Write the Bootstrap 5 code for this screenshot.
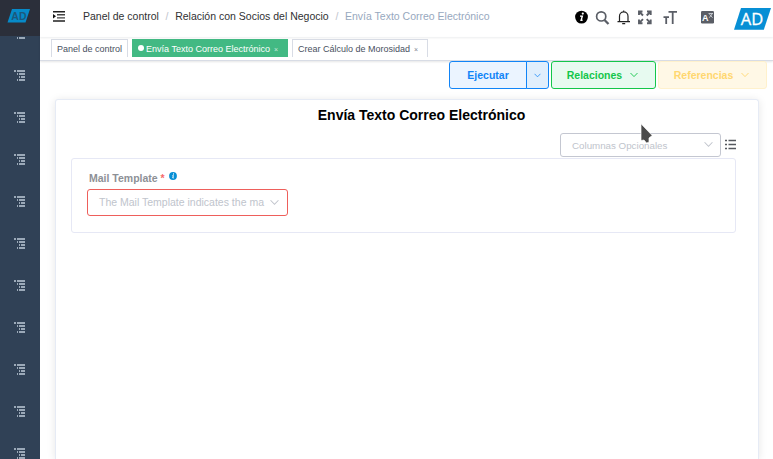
<!DOCTYPE html>
<html lang="es">
<head>
<meta charset="utf-8">
<meta name="viewport" content="width=device-width, initial-scale=1">
<title>Envía Texto Correo Electrónico</title>
<link href="https://cdn.jsdelivr.net/npm/bootstrap@5.3.0/dist/css/bootstrap.min.css" rel="stylesheet">
<style>
body{font-family:"Liberation Sans",Arial,sans-serif;font-size:10.5px;line-height:1.2;color:#303133;background:#fff;height:459px}
svg{display:block;flex:none}
.side{width:40px;background:#304156}
.side-logo{height:36px;background:#2b2f3a;padding:8px 0 0 7px;position:relative;z-index:1}
.side-menu{margin-top:-8px}
.side-item{height:42px;padding:0 0 0 14px}
.topbar{height:37px;padding-left:13px;box-shadow:0 1px 2px rgba(0,21,41,.08)}
.crumbs{--bs-breadcrumb-divider-color:#c0c4cc;--bs-breadcrumb-item-padding-x:6.7px;--bs-breadcrumb-item-active-color:#97a8be;margin-left:18px;padding-bottom:5px}
.crumbs a{color:#303133;text-decoration:none}
.tools{padding-right:2px}
.tags{height:24px;padding:2px 0 0 11px;gap:4px;border-bottom:1px solid #d8dce5;box-shadow:0 1px 2px rgba(0,0,0,.1);font-size:9px}
.tag{height:18px;border:1px solid #d8dce5;border-bottom:0;color:#495060;padding:1px 5px 0;text-decoration:none;white-space:nowrap}
.tag.on{background:#42b983;border-color:#42b983;color:#fff}
.dot{width:6px;height:6px;border-radius:50%;background:#fff;margin:-2px 2px 0 0}
.x{font-size:7px;margin:0 4px;opacity:.7;padding-top:2px}
.actions{padding:0 6px 0 0;gap:2px}
.act{--bs-btn-font-size:10.5px;--bs-btn-font-weight:700;--bs-btn-line-height:1.2;--bs-btn-border-radius:3px;--bs-btn-padding-y:0;height:28px}
.act-run{--bs-btn-color:#1184f7;--bs-btn-bg:#ebf4ff;--bs-btn-border-color:#1184f7}
.act-main{width:78px}
.act-drop{width:23px;--bs-btn-padding-x:0;--bs-btn-bg:#e0eefc}
.act-rel{width:105px;--bs-btn-color:#13c64a;--bs-btn-bg:#e7faf0;--bs-btn-border-color:#13c64a;--bs-btn-padding-x:0;padding-right:2px}
.act-ref{width:109px;--bs-btn-color:#ffd770;--bs-btn-bg:#fff8e6;--bs-btn-border-color:#fff1cc;--bs-btn-padding-x:0;padding-right:2px}
.panel{margin:10px 14px 0 15px;padding:0 22px 0 15px;border:1px solid #e6ebf5;border-bottom:0;border-radius:3px 3px 0 0;box-shadow:0 1px 9px rgba(0,0,0,.1)}
.heading{font-size:14px;font-weight:700;color:#000;line-height:18px;padding:6px 0 0 29px;margin:0 -7px 0 0}
.optional{margin:9px -1px 0 0;gap:4px}
.picker{height:24px;border:1px solid #c4c7d1;border-radius:3px;color:#c0c4cc;background:#fff}
.picker-cols{width:161px;padding:0 7px 2px 11px;font-size:9.75px}
.picker-mail{width:201px;height:27px;border-color:#ee5f5b;padding:0 8px 0 11px}
.fields{height:75px;margin-top:1px;padding:13px 15px;border:1px solid #e6e8f5;border-radius:3px}
.field-label{font-weight:700;color:#8d9096;height:14px;margin:0 0 3px 2px;gap:4px}
.need{color:#f56c6c}
.pointer{position:absolute;left:640px;top:123px;z-index:5}
</style>
<script src="https://cdn.jsdelivr.net/npm/bootstrap@5.3.0/dist/js/bootstrap.bundle.min.js"></script>
</head>
<body class="d-flex overflow-hidden">
<svg class="d-none">
  <symbol id="tree" viewBox="0 0 12 12"><path d="M0 1h2M3 1h8M3 4h1M5 4h6M5 7h1M7 7h4M3 10h1M5 10h6" stroke="#bfcbd9" stroke-width="1.600" fill="none"/></symbol>
  <symbol id="chev" viewBox="0 0 8 6"><path d="M.5 1 4 4.600 7.500 1" fill="none" stroke="currentColor" stroke-width=".9"/></symbol>
</svg>
<aside class="side flex-shrink-0 overflow-hidden">
  <div class="side-logo">
    <svg width="23" height="15" viewBox="0 0 23 15"><path d="M5 1h18l-4.500 13.500H.5z" fill="#078ac8"/><text x="4.300" y="11.600" font-size="10.500" font-weight="700" fill="#1c587c">AD</text></svg>
  </div>
  <nav class="side-menu d-flex flex-column">
    <a class="side-item" href="#"><svg width="12" height="12"><use href="#tree"/></svg></a>
    <a class="side-item" href="#"><svg width="12" height="12"><use href="#tree"/></svg></a>
    <a class="side-item" href="#"><svg width="12" height="12"><use href="#tree"/></svg></a>
    <a class="side-item" href="#"><svg width="12" height="12"><use href="#tree"/></svg></a>
    <a class="side-item" href="#"><svg width="12" height="12"><use href="#tree"/></svg></a>
    <a class="side-item" href="#"><svg width="12" height="12"><use href="#tree"/></svg></a>
    <a class="side-item" href="#"><svg width="12" height="12"><use href="#tree"/></svg></a>
    <a class="side-item" href="#"><svg width="12" height="12"><use href="#tree"/></svg></a>
    <a class="side-item" href="#"><svg width="12" height="12"><use href="#tree"/></svg></a>
    <a class="side-item" href="#"><svg width="12" height="12"><use href="#tree"/></svg></a>
    <a class="side-item" href="#"><svg width="12" height="12"><use href="#tree"/></svg></a>
  </nav>
</aside>
<div class="flex-grow-1 d-flex flex-column">
  <header class="topbar d-flex align-items-center flex-shrink-0">
    <svg class="mb-1" width="12" height="12" viewBox="0 .5 12 12"><path d="M0 1.200h12M0 10.500h12" stroke="#222" stroke-width="1.600"/><path d="M4 4.300h8M4 7.400h8" stroke="#444" stroke-width="1.400"/><path d="M0 3.500v4.600L3 5.800z" fill="#111"/></svg>
    <ol class="crumbs breadcrumb mb-0 text-nowrap">
      <li class="breadcrumb-item"><a href="#">Panel de control</a></li>
      <li class="breadcrumb-item"><a href="#">Relación con Socios del Negocio</a></li>
      <li class="breadcrumb-item active">Envía Texto Correo Electrónico</li>
    </ol>
    <div class="tools d-flex align-items-center ms-auto">
      <svg width="196" height="36" viewBox="575 .8 196 36" fill="none">
        <circle cx="581.500" cy="16.900" r="6.400" fill="#000"/><circle cx="582.800" cy="13.400" r="1.100" fill="#fff"/><path d="M580 15.900h2.300l-1.200 4.200h1.500" stroke="#fff" stroke-width="1.400"/>
        <circle cx="601.200" cy="16.200" r="4.600" stroke="#5a5e66" stroke-width="1.700"/><path d="m604.500 19.700 4 4.200" stroke="#5a5e66" stroke-width="2.200"/>
        <path d="M617.500 21.500h12.500M619.500 21.500v-5.500a4.200 4.200 0 0 1 8.500 0v5.500M623.700 11.500V10.200M622.200 23.400h3" stroke="#222" stroke-width="1.200"/>
        <path d="M639 14.800v-3.500h3.500M647 11.300h3.700v3.500M650.700 19.300v3.700H647M642.500 23H639v-3.700M639 11.300l4 4M650.700 11.300l-4 4M650.700 23l-4-4M639 23l4-4" stroke="#5a5e66" stroke-width="1.900"/>
        <path d="M668.500 11.700h8.500M672.700 11.700v12M663.500 17h5.500M666.200 17v6.700" stroke="#5a5e66" stroke-width="1.800"/>
        <rect x="701" y="10.800" width="13" height="12.500" rx="1.200" fill="#5a5e66"/><text x="702" y="20.800" font-size="9" font-weight="700" fill="#fff">A</text><path d="M708.500 13.300h4.500M709.300 17.500l3-4M709.500 14l3 3.500" stroke="#dcdfe6" stroke-width=".8"/>
        <path d="M741 7.800h30l-7.200 21.800H734z" fill="#078fd5"/><text x="740.800" y="24.600" font-family="Open Sans,Noto Sans,sans-serif" font-size="16.500" fill="#fff" stroke="#fff" stroke-width=".3">AD</text>
      </svg>
    </div>
  </header>
  <div class="tags d-flex flex-shrink-0">
    <a class="tag d-flex align-items-center" href="#">Panel de control</a>
    <a class="tag on d-flex align-items-center" href="#"><span class="dot"></span>Envía Texto Correo Electrónico<span class="x">×</span></a>
    <a class="tag d-flex align-items-center" href="#">Crear Cálculo de Morosidad<span class="x">×</span></a>
  </div>
  <div class="actions d-flex justify-content-end flex-shrink-0">
    <div class="btn-group">
      <button class="btn act act-run act-main">Ejecutar</button>
      <button class="btn act act-run act-drop d-flex align-items-center justify-content-center" aria-label="Más"><svg width="7" height="5"><use href="#chev"/></svg></button>
    </div>
    <button class="btn act act-rel d-flex align-items-center justify-content-center gap-2">Relaciones<svg width="8" height="6"><use href="#chev"/></svg></button>
    <button class="btn act act-ref d-flex align-items-center justify-content-center gap-2">Referencias<svg width="8" height="6"><use href="#chev"/></svg></button>
  </div>
  <main class="panel flex-grow-1">
    <h1 class="heading text-center">Envía Texto Correo Electrónico</h1>
    <div class="optional d-flex justify-content-end align-items-center">
      <div class="picker picker-cols d-flex align-items-center justify-content-between"><span class="pt-1">Columnas Opcionales</span><svg width="9" height="7"><use href="#chev"/></svg></div>
      <svg width="12" height="12" viewBox="0 .5 12 12"><path d="M0 2h2M3.500 2H11M0 6h2M3.500 6H11M0 10h2M3.500 10H11" stroke="#55585e" stroke-width="1.600"/></svg>
    </div>
    <section class="fields">
      <div class="field-label d-flex"><span>Mail Template <span class="need">*</span></span>
        <svg width="8" height="8" viewBox="0 0 8 8"><circle cx="4" cy="4" r="3.900" fill="#078fd5"/><path d="M4.500 1.400v1.200M3.500 3.500h.8L3.800 6h.8" stroke="#fff" fill="none"/></svg></div>
      <div class="picker picker-mail d-flex align-items-center justify-content-between"><span>The Mail Template indicates the ma</span><svg width="9" height="7"><use href="#chev"/></svg></div>
    </section>
  </main>
</div>
<svg class="pointer" width="14" height="22" viewBox="0 0 14 22"><path d="M1 .8v16.700l3-.5 2.500 3 2.500-.8V15l3.200-2.500z" fill="#4a4a4a" stroke="#fff" stroke-width=".7"/></svg>
</body>
</html>
